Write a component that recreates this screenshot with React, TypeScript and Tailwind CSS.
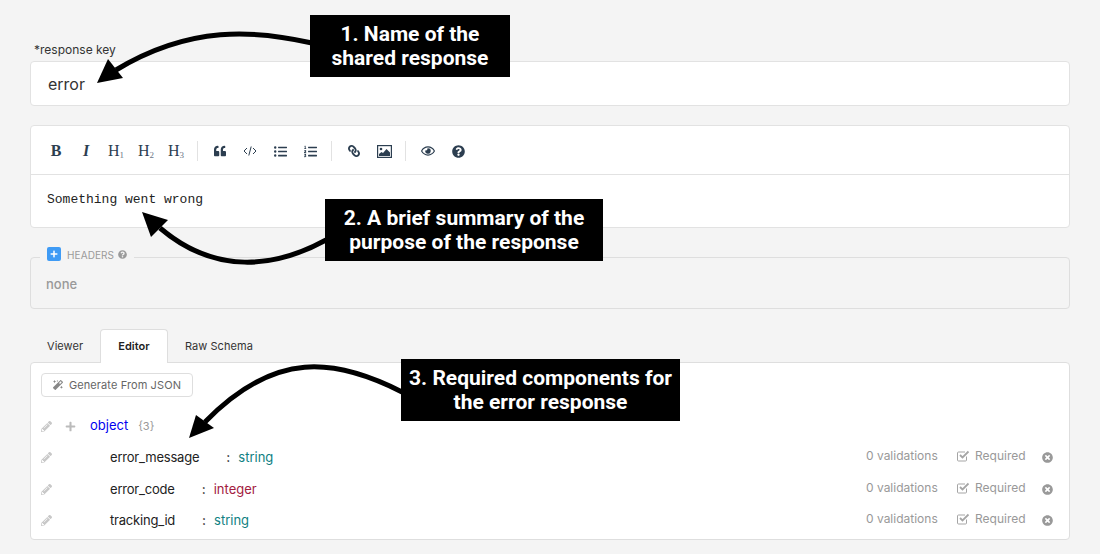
import { FaQuoteLeft, FaListUl, FaListOl, FaLink, FaRegEye, FaQuestionCircle, FaPencilAlt, FaPlus, FaMagic, FaTimesCircle } from 'react-icons/fa'

const fields = [
  { name: 'error_message', type: 'string', color: 'text-[#0f7f82]' },
  { name: 'error_code', type: 'integer', color: 'text-[#a3203f]' },
  { name: 'tracking_id', type: 'string', color: 'text-[#0f7f82]' },
]

function Heading({ n }: { n: number }) {
  return (
    <button className="flex h-[30px] w-[30px] items-baseline justify-center font-['Liberation_Serif',serif] text-[16px] leading-[30px] text-[#2c3e50]">
      H<span className="text-[9px] text-[#6b7785] translate-y-[2px]">{n}</span>
    </button>
  )
}

function Tool({ children }: { children: React.ReactNode }) {
  return <button className="flex h-[30px] w-[30px] items-center justify-center text-[#2c3e50]">{children}</button>
}

function Sep() {
  return <div className="ml-[6px] mr-[7px] h-[20px] w-px bg-[#e2e2e2]" />
}

export default function App() {
  return (
    <div className="relative h-[554px] w-[1100px] overflow-hidden bg-[#f4f4f4] px-[30px] pt-[42px] font-['Inter',sans-serif] text-[#333]">
      <label className="ml-[4px] block h-[19px] text-[12px] leading-[16px] text-[#333]">*response key</label>
      <div className="flex h-[45px] items-center rounded-sm border border-[#e2e2e2] bg-white pl-[17px] text-[16px] text-[#333]">error</div>

      <div className="mt-[19px] h-[103px] rounded-sm border border-[#e2e2e2] bg-white">
        <div className="flex h-[49px] items-center border-b border-[#e2e2e2] pl-[10px] pt-[2px]">
          <button className="h-[30px] w-[30px] font-['Liberation_Serif',serif] text-[16px] font-bold text-[#2c3e50]">B</button>
          <button className="h-[30px] w-[30px] font-['Liberation_Serif',serif] text-[16px] font-bold italic text-[#2c3e50]">I</button>
          <Heading n={1} />
          <Heading n={2} />
          <Heading n={3} />
          <Sep />
          <Tool><FaQuoteLeft size={12} /></Tool>
          <Tool>
            <svg width="14" height="12" viewBox="0 0 14 12" fill="none" stroke="currentColor" strokeWidth="1">
              <path d="M4 3 1 6l3 3M10 3l3 3-3 3M8.2 1.5 5.8 10.5" />
            </svg>
          </Tool>
          <Tool><FaListUl size={13} /></Tool>
          <Tool><FaListOl size={13} /></Tool>
          <Sep />
          <Tool><FaLink size={12} className="-scale-x-100" /></Tool>
          <Tool>
            <svg width="15" height="13" viewBox="0 0 15 13">
              <rect x="0.6" y="0.6" width="13.8" height="11.8" fill="none" stroke="currentColor" strokeWidth="1.2" />
              <circle cx="4" cy="4" r="1.3" fill="currentColor" />
              <path d="M2 11V9l2.5-2 1.5 1 3.5-4L13 7.5V11z" fill="currentColor" />
            </svg>
          </Tool>
          <Sep />
          <Tool><FaRegEye size={14} /></Tool>
          <Tool><FaQuestionCircle size={13} /></Tool>
        </div>
        <div className="pl-[16px] pt-[17px] font-['Liberation_Mono',monospace] text-[13px] leading-[16px] text-[#222]">Something went wrong</div>
      </div>

      <fieldset className="mt-[19px] h-[62px] rounded-sm border border-[#dedede] px-[15px]">
        <legend className="-ml-[6px] flex h-[20px] items-start gap-[6px] px-[7px] text-[10px] leading-[14px] tracking-[0.1px] text-[#9a9a9a]">
          <span className="flex h-[14px] w-[14px] items-center justify-center rounded-[2px] bg-[#3f9bf5] text-white">
            <FaPlus size={8} />
          </span>
          <span className="mt-[1px]">HEADERS</span>
          <FaQuestionCircle size={9} className="mt-[3px] -ml-[2px] text-[#9a9a9a]" />
        </legend>
        <div className="mt-[8px] text-[13px] font-medium leading-[18px] text-[#999]">none</div>
      </fieldset>

      <div className="mt-[20px] flex h-[33px] text-[11px] tracking-[0.05px] text-[#333]">
        <div className="flex w-[70px] items-center pl-[17px] pt-[2px]">Viewer</div>
        <div className="relative z-10 flex h-[34px] w-[68px] items-center justify-center rounded-t-sm border border-b-0 border-[#dedede] bg-white font-semibold text-[#222]">Editor</div>
        <div className="flex items-center pl-[17px] pt-[2px]">Raw Schema</div>
      </div>

      <div className="h-[178px] rounded-sm border border-[#dedede] bg-white px-[10px] pt-[10px]">
        <button className="flex h-[24px] w-[152px] items-center justify-center gap-[6px] rounded-sm border border-[#dedede] text-[11px] tracking-[0.1px] text-[#666]">
          <FaMagic size={10} className="text-[#888]" />
          Generate From JSON
        </button>
        <div className="mt-[13px] flex h-[32px] items-center text-[13px]">
          <FaPencilAlt size={11} className="text-[#c8c8c8]" />
          <FaPlus size={11} className="ml-[13px] text-[#bbb]" />
          <span className="ml-[14px] text-[#0000f0]">object</span>
          <span className="ml-[10px] text-[11px] text-[#999]">{'{3}'}</span>
        </div>
        {fields.map(f => (
          <div key={f.name} className="flex h-[31.5px] items-center text-[13px] text-[#222]">
            <FaPencilAlt size={11} className="text-[#c8c8c8]" />
            <span className="ml-[58px] tracking-[-0.2px]">{f.name}</span>
            <span className="ml-[27px] font-medium">:</span>
            <span className={`ml-[8px] ${f.color}`}>{f.type}</span>
            <div className="ml-auto mb-[3px] mr-[6px] flex items-center text-[12px] text-[#999]">
              <span className="w-[91px]">0 validations</span>
              <svg width="13" height="12" viewBox="0 0 13 12" fill="none" stroke="#a5a5a5">
                <path d="M9.5 6.5v3.5a1 1 0 0 1-1 1H1.5a1 1 0 0 1-1-1V3a1 1 0 0 1 1-1h6.5" />
                <path d="M3 5l2.5 2.5L11.5 1.5" strokeWidth="1.8" />
              </svg>
              <span className="ml-[5px] w-[67px]">Required</span>
              <FaTimesCircle size={11} className="mt-[3px] text-[#999]" />
            </div>
          </div>
        ))}
      </div>

      <svg className="pointer-events-none absolute inset-0 z-20" width="1100" height="554" viewBox="0 0 1100 554" fill="none">
        <path d="M312 43 C 255 30, 190 25, 116 70" stroke="#000" strokeWidth="5" />
        <polygon points="97,83 108,59 123,78" fill="#000" />
        <path d="M326 240 C 275 268, 215 275, 160 228" stroke="#000" strokeWidth="5" />
        <polygon points="142,212 168,220 151,237" fill="#000" />
        <path d="M402 392 C 335 358, 275 350, 205 422" stroke="#000" strokeWidth="5" />
        <polygon points="189,438 196,415 214,428" fill="#000" />
      </svg>

      <div className="absolute left-[310px] top-[15px] z-30 flex h-[62px] w-[200px] items-center justify-center bg-black text-center font-['Roboto',sans-serif] text-[21px] font-bold leading-[24px] text-white">
        1. Name of the<br />shared response
      </div>
      <div className="absolute left-[325px] top-[199px] z-30 flex h-[62px] w-[278px] items-center justify-center bg-black text-center font-['Roboto',sans-serif] text-[21px] font-bold leading-[24px] text-white">
        2. A brief summary of the<br />purpose of the response
      </div>
      <div className="absolute left-[401px] top-[359px] z-30 flex h-[62px] w-[279px] items-center justify-center bg-black text-center font-['Roboto',sans-serif] text-[21px] font-bold leading-[24px] text-white">
        3. Required components for<br />the error response
      </div>
    </div>
  )
}
